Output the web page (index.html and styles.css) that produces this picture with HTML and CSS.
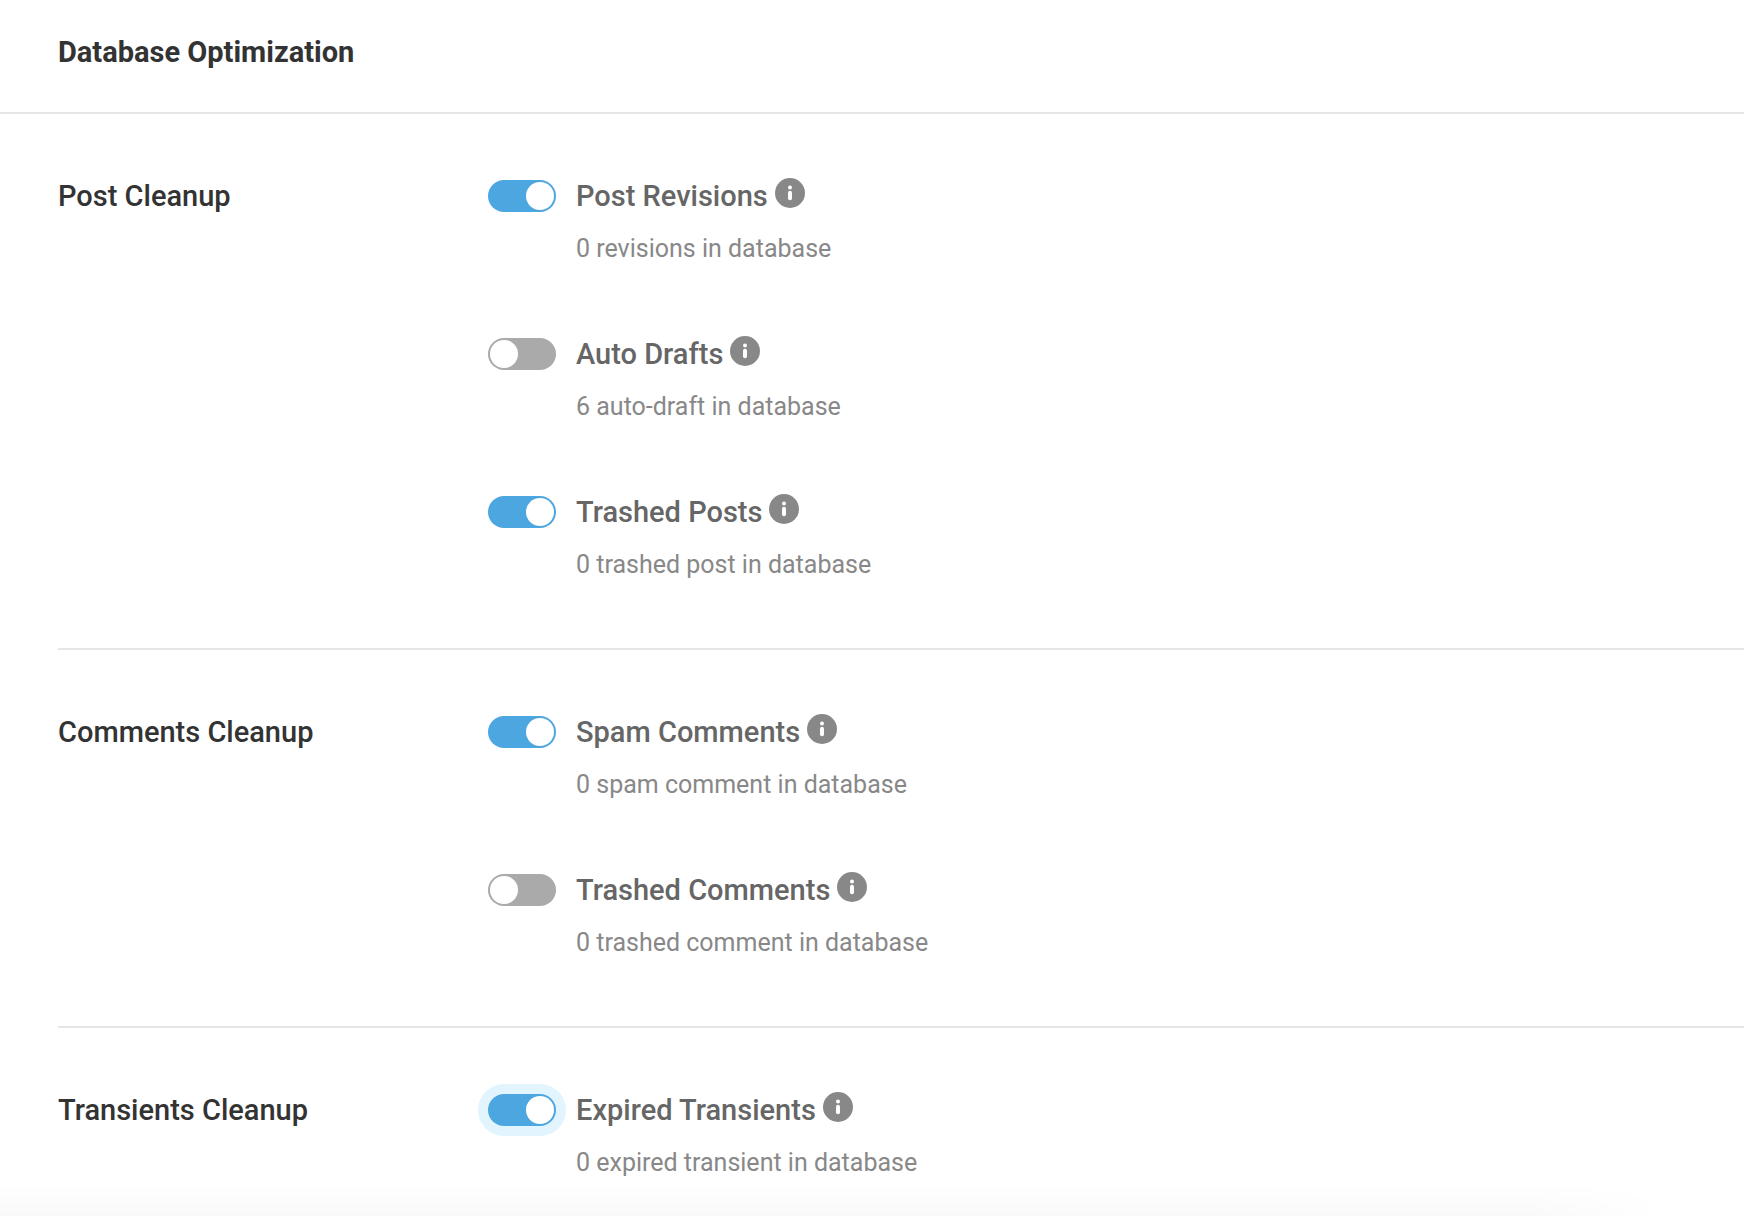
FILE: index.html
```
<!DOCTYPE html>
<html lang="en">
<head>
    <meta charset="UTF-8">
    <meta name="viewport" content="width=device-width, initial-scale=1.0">
    <title>Database Optimization</title>
    <link rel="stylesheet" href="styles.css">
</head>
<body>
    <svg class="icon-defs" aria-hidden="true">
        <symbol id="icon-info" viewBox="0 0 30 30">
            <circle cx="15" cy="15" r="15" fill="currentColor"/>
            <circle cx="15" cy="9.4" r="2" fill="#fff"/>
            <rect x="13" y="12.8" width="4" height="9.4" rx="2" fill="#fff"/>
        </symbol>
    </svg>

    <header class="page-header">
        <h1>Database Optimization</h1>
    </header>

    <main class="settings">
        <section class="settings-row">
            <h2>Post Cleanup</h2>
            <div class="options">
                <div class="option">
                    <input type="checkbox" role="switch" class="toggle" id="postRevisions" aria-describedby="postRevisionsText" checked>
                    <div class="option-title">
                        <label for="postRevisions">Post Revisions</label>
                        <button type="button" class="info" aria-label="About post revisions"><svg><use href="#icon-info"/></svg></button>
                    </div>
                    <p id="postRevisionsText">0 revisions in database</p>
                </div>
                <div class="option">
                    <input type="checkbox" role="switch" class="toggle" id="autoDrafts" aria-describedby="autoDraftsText">
                    <div class="option-title">
                        <label for="autoDrafts">Auto Drafts</label>
                        <button type="button" class="info" aria-label="About auto drafts"><svg><use href="#icon-info"/></svg></button>
                    </div>
                    <p id="autoDraftsText">6 auto-draft in database</p>
                </div>
                <div class="option">
                    <input type="checkbox" role="switch" class="toggle" id="trashedPosts" aria-describedby="trashedPostsText" checked>
                    <div class="option-title">
                        <label for="trashedPosts">Trashed Posts</label>
                        <button type="button" class="info" aria-label="About trashed posts"><svg><use href="#icon-info"/></svg></button>
                    </div>
                    <p id="trashedPostsText">0 trashed post in database</p>
                </div>
            </div>
        </section>

        <section class="settings-row">
            <h2>Comments Cleanup</h2>
            <div class="options">
                <div class="option">
                    <input type="checkbox" role="switch" class="toggle" id="spamComments" aria-describedby="spamCommentsText" checked>
                    <div class="option-title">
                        <label for="spamComments">Spam Comments</label>
                        <button type="button" class="info" aria-label="About spam comments"><svg><use href="#icon-info"/></svg></button>
                    </div>
                    <p id="spamCommentsText">0 spam comment in database</p>
                </div>
                <div class="option">
                    <input type="checkbox" role="switch" class="toggle" id="trashedComments" aria-describedby="trashedCommentsText">
                    <div class="option-title">
                        <label for="trashedComments">Trashed Comments</label>
                        <button type="button" class="info" aria-label="About trashed comments"><svg><use href="#icon-info"/></svg></button>
                    </div>
                    <p id="trashedCommentsText">0 trashed comment in database</p>
                </div>
            </div>
        </section>

        <section class="settings-row">
            <h2>Transients Cleanup</h2>
            <div class="options">
                <div class="option">
                    <input type="checkbox" role="switch" class="toggle focused" id="expiredTransients" aria-describedby="expiredTransientsText" checked>
                    <div class="option-title">
                        <label for="expiredTransients">Expired Transients</label>
                        <button type="button" class="info" aria-label="About expired transients"><svg><use href="#icon-info"/></svg></button>
                    </div>
                    <p id="expiredTransientsText">0 expired transient in database</p>
                </div>
            </div>
        </section>
    </main>
    <div class="bottom-shade"></div>
</body>
</html>
```

FILE: styles.css
```
* {
    box-sizing: border-box;
}

body {
    margin: 0;
    background-color: #fff;
    color: #333;
    font-family: Roboto, sans-serif;
}

h1, h2, p {
    margin: 0;
}

.icon-defs {
    display: none;
}

.page-header {
    padding: 30px 58px 38px;
    border-bottom: 2px solid #e6e6e6;
}

h1 {
    font-size: 29px;
    font-weight: 700;
    line-height: 44px;
}

h2 {
    font-size: 29px;
    font-weight: 500;
    line-height: 44px;
}

.settings {
    padding-left: 58px;
}

.settings-row {
    display: grid;
    grid-template-columns: 400px 1fr;
    column-gap: 30px;
    padding: 60px 0 62px;
    border-bottom: 2px solid #e6e6e6;
}

.settings-row:last-child {
    padding-bottom: 20px;
    border-bottom: none;
}

.options {
    display: flex;
    flex-direction: column;
    gap: 62px;
}

.option {
    display: grid;
    grid-template-columns: 68px 1fr;
    column-gap: 20px;
    row-gap: 10px;
    align-items: center;
}

.option-title {
    display: flex;
    align-items: flex-start;
    gap: 7px;
    color: #666;
    font-size: 29px;
    font-weight: 500;
    line-height: 44px;
}

.option p {
    grid-column: 2;
    color: #888;
    font-size: 25px;
    line-height: 42px;
}

.toggle {
    appearance: none;
    width: 68px;
    height: 32px;
    margin: 0;
    padding: 2px;
    border-radius: 16px;
    background-color: #aaa;
    cursor: pointer;
}

.toggle::before {
    content: "";
    display: block;
    width: 28px;
    height: 28px;
    border-radius: 50%;
    background-color: #fff;
}

.toggle:checked {
    background-color: #4ca6df;
}

.toggle:checked::before {
    margin-left: auto;
}

.toggle.focused,
.toggle:focus-visible {
    outline: none;
    box-shadow: 0 0 0 10px #e2f4fe;
}

.info {
    display: flex;
    padding: 4px 0;
    border: none;
    background: none;
    color: #888;
    cursor: pointer;
}

.info svg {
    width: 30px;
    height: 30px;
}

/* soft shade along the bottom edge of the window */
.bottom-shade {
    position: fixed;
    right: 80px;
    bottom: 0;
    left: 0;
    height: 32px;
    background: linear-gradient(rgba(0, 0, 0, 0), rgba(0, 0, 0, 0.025));
    mask-image: linear-gradient(to left, transparent, #000 140px);
    pointer-events: none;
}
```
